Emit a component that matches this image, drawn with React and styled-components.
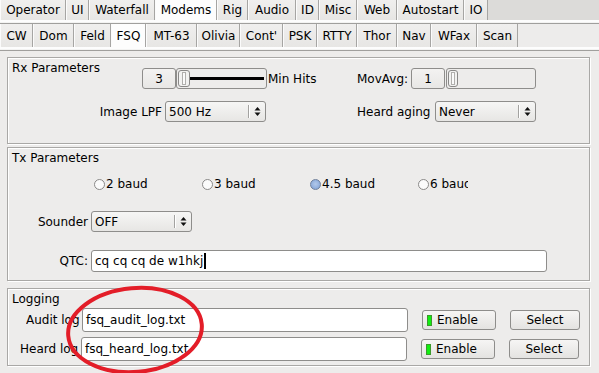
import React from 'react'
import styled, { createGlobalStyle } from 'styled-components'

const GlobalStyle = createGlobalStyle`
  html, body { margin: 0; padding: 0; background: #edeceb; }
  body {
    font-family: "DejaVu Sans", Verdana, sans-serif;
    font-size: 12px;
    color: #000;
  }
`

const Window = styled.div`
  position: relative;
  width: 599px;
  height: 373px;
  overflow: hidden;
  background: #edeceb;
`

const TabBar = styled.div`
  display: flex;
  height: ${(p) => p.h}px;
  background: ${(p) => p.bg};
`

const Tab = styled.div`
  box-sizing: border-box;
  flex: none;
  width: ${(p) => p.w}px;
  display: flex;
  align-items: center;
  justify-content: center;
  white-space: nowrap;
  background: ${(p) => (p.active ? '#fdfdfd' : 'linear-gradient(#f0efee, #e7e6e4)')};
  border-left: 1px solid #fbfbfb;
  border-right: 1px solid #a6a5a3;
`

const TabRule = styled.div`
  box-sizing: border-box;
  height: 4px;
  background: #f3f3f2;
  border-top: 2px solid #fdfdfd;
  border-bottom: 1px solid #a09f9d;
`

const Content = styled.div`
  padding-left: 7px;
`

const Panel = styled.div`
  box-sizing: border-box;
  width: 583px;
  height: ${(p) => p.h}px;
  margin-top: ${(p) => p.mt}px;
  border: 1px solid #a9a8a6;
  box-shadow: inset 1px 1px 0 #fff, 1px 1px 0 #fff;
`

const PanelTitle = styled.div`
  height: 7px;
  margin-top: 3px;
  padding-left: 4px;
  line-height: 14px;
  white-space: nowrap;
`

const Row = styled.div`
  display: flex;
  align-items: center;
  height: ${(p) => p.h}px;
  margin-top: ${(p) => p.mt || 0}px;
  padding-left: ${(p) => p.pl || 0}px;
`

const Label = styled.div`
  flex: none;
  box-sizing: border-box;
  width: ${(p) => p.w}px;
  margin-left: ${(p) => p.ml || 0}px;
  text-align: ${(p) => (p.right ? 'right' : 'left')};
  padding-right: ${(p) => (p.right ? 3 : 0)}px;
  white-space: nowrap;
  overflow: hidden;
`

const Counter = styled.div`
  box-sizing: border-box;
  flex: none;
  width: 34px;
  height: 21px;
  display: flex;
  align-items: center;
  justify-content: center;
  border: 1px solid #8e8d8b;
  border-radius: 3px;
  background: linear-gradient(#f3f2f1, #e8e7e5);
`

const Slider = styled.div`
  box-sizing: border-box;
  flex: none;
  display: flex;
  align-items: center;
  width: ${(p) => p.w}px;
  height: 21px;
  margin-left: ${(p) => p.ml || 0}px;
  padding: 0 2px 0 1px;
  border: 1px solid #8e8d8b;
  border-radius: 3px;
  background: #edeceb;
`

const Handle = styled.div`
  box-sizing: border-box;
  flex: none;
  width: ${(p) => p.w}px;
  height: 17px;
  border: 1px solid #8a8988;
  border-radius: 3px;
  background: #f2f2f1;
  display: flex;
  justify-content: center;
  align-items: center;

  &::after {
    content: '';
    box-sizing: border-box;
    width: 4px;
    height: 13px;
    border: 1px solid #b0afad;
    background: #fbfbfb;
  }
`

const Track = styled.div`
  flex: 1;
  height: 3px;
  background: #000;
`

const Choice = styled.div`
  box-sizing: border-box;
  flex: none;
  display: flex;
  align-items: center;
  width: 101px;
  height: 21px;
  margin-left: ${(p) => p.ml || 0}px;
  border: 1px solid #8e8d8b;
  border-radius: 3px;
  background: linear-gradient(#f6f6f5, #e7e6e4);
`

const ChoiceText = styled.div`
  flex: 1;
  padding-left: 3px;
  white-space: nowrap;
`

const ChoiceArrows = styled.div`
  flex: none;
  box-sizing: border-box;
  width: 17px;
  height: 13px;
  display: flex;
  align-items: center;
  justify-content: center;
  border-left: 1px solid #a3a2a0;
  box-shadow: inset 1px 0 0 #fff;
`

const RadioItem = styled.div`
  flex: none;
  display: flex;
  align-items: center;
  width: ${(p) => p.w}px;
  overflow: hidden;
  white-space: nowrap;
`

const RadioDot = styled.div`
  box-sizing: border-box;
  flex: none;
  width: 11px;
  height: 11px;
  margin-right: 1px;
  border-radius: 50%;
  border: 1px solid ${(p) => (p.on ? '#6f7f9a' : '#8a8988')};
  background: ${(p) => (p.on ? 'radial-gradient(circle at 50% 45%, #b3c9ea, #7c9fd4)' : '#fbfbfb')};
`

const TextField = styled.div`
  box-sizing: border-box;
  flex: none;
  display: flex;
  align-items: center;
  width: ${(p) => p.w}px;
  height: ${(p) => p.h}px;
  margin-left: ${(p) => p.ml || 0}px;
  padding-left: 3px;
  border: 1px solid #8e8d8b;
  border-radius: 3px;
  background: #fff;
  white-space: nowrap;
`

const Caret = styled.span`
  display: inline-block;
  width: 2px;
  height: 16px;
  margin-left: 1px;
  background: #000;
`

const Button = styled.div`
  box-sizing: border-box;
  flex: none;
  display: flex;
  align-items: center;
  justify-content: ${(p) => (p.light ? 'flex-start' : 'center')};
  width: ${(p) => p.w}px;
  height: 20px;
  margin-left: ${(p) => p.ml || 0}px;
  padding-left: ${(p) => (p.light ? 4 : 0)}px;
  border: 1px solid #8e8d8b;
  border-radius: 3px;
  background: linear-gradient(#f6f5f4, #e4e3e1);
`

const Light = styled.span`
  box-sizing: border-box;
  width: 5px;
  height: 11px;
  margin-right: 5px;
  border: 1px solid #3c9a2c;
  background: #12ee12;
`

const Annotation = styled.svg`
  position: absolute;
  left: 60px;
  top: 280px;
  overflow: visible;
`

const topTabs = [
  ['Operator', 66], ['UI', 23], ['Waterfall', 66], ['Modems', 62], ['Rig', 31],
  ['Audio', 48], ['ID', 23], ['Misc', 38], ['Web', 40], ['Autostart', 67], ['IO', 24]
]

const modemTabs = [
  ['CW', 33], ['Dom', 41], ['Feld', 37], ['FSQ', 35], ['MT-63', 51], ['Olivia', 43],
  ["Cont'", 43], ['PSK', 34], ['RTTY', 40], ['Thor', 40], ['Nav', 34], ['WFax', 46], ['Scan', 41]
]

const bauds = ['2 baud', '3 baud', '4.5 baud', '6 baud']

const Arrows = () => (
  <svg width="7" height="11" viewBox="0 0 7 11">
    <polygon points="0.5,4.5 3.5,1 6.5,4.5" fill="#111" />
    <polygon points="0.5,6.5 3.5,10 6.5,6.5" fill="#111" />
  </svg>
)

const SelectBox = ({ value, ml }) => (
  <Choice ml={ml}>
    <ChoiceText>{value}</ChoiceText>
    <ChoiceArrows>
      <Arrows />
    </ChoiceArrows>
  </Choice>
)

const LogRow = ({ label, file, pl, lw, fw, mt }) => (
  <Row h={24} mt={mt} pl={pl}>
    <Label w={lw}>{label}</Label>
    <TextField w={fw} h={24}>{file}</TextField>
    <Button w={74} ml={14} light>
      <Light />
      Enable
    </Button>
    <Button w={70} ml={14}>Select</Button>
  </Row>
)

const App = () => {
  return (
    <>
      <GlobalStyle />
      <Window>
        <TabBar h={20} bg="#dcdbd9">
          {topTabs.map(([name, w]) => (
            <Tab key={name} w={w} active={name === 'Modems'}>{name}</Tab>
          ))}
        </TabBar>
        <TabRule />
        <TabBar h={23} bg="#edeceb">
          {modemTabs.map(([name, w]) => (
            <Tab key={name} w={w} active={name === 'FSQ'}>{name}</Tab>
          ))}
        </TabBar>
        <TabRule />

        <Content>
          <Panel h={87} mt={6}>
            <PanelTitle>Rx Parameters</PanelTitle>
            <Row h={21} pl={134}>
              <Counter>3</Counter>
              <Slider w={91}>
                <Handle w={12} />
                <Track />
              </Slider>
              <Label w={89} ml={1}>Min Hits</Label>
              <Label w={54}>MovAvg:</Label>
              <Counter>1</Counter>
              <Slider w={90} ml={1}>
                <Handle w={10} />
              </Slider>
            </Row>
            <Row h={21} mt={12}>
              <Label w={157} right>Image LPF</Label>
              <SelectBox value="500 Hz" />
              <Label w={78} ml={91}>Heard aging</Label>
              <SelectBox value="Never" />
            </Row>
          </Panel>

          <Panel h={134} mt={3}>
            <PanelTitle>Tx Parameters</PanelTitle>
            <Row h={20} mt={16} pl={86}>
              {bauds.map((b, i) => (
                <RadioItem key={b} w={i === bauds.length - 1 ? 50 : 108}>
                  <RadioDot on={b === '4.5 baud'} />
                  {b}
                </RadioItem>
              ))}
            </Row>
            <Row h={21} mt={17}>
              <Label w={83} right>Sounder</Label>
              <SelectBox value="OFF" />
            </Row>
            <Row h={22} mt={18}>
              <Label w={83} right>QTC:</Label>
              <TextField w={456} h={22}>
                cq cq cq de w1hkj
                <Caret />
              </TextField>
            </Row>
          </Panel>

          <Panel h={78} mt={7}>
            <PanelTitle>Logging</PanelTitle>
            <LogRow label="Audit log" file="fsq_audit_log.txt" pl={18} lw={56} fw={326} mt={9} />
            <LogRow label="Heard log" file="fsq_heard_log.txt" pl={12} lw={61} fw={326} mt={5} />
          </Panel>
        </Content>

        <Annotation width="150" height="95" viewBox="0 0 150 95">
          <ellipse
            cx="75"
            cy="50"
            rx="67"
            ry="42"
            fill="none"
            stroke="#e31d28"
            strokeWidth="4"
            transform="rotate(-5 75 50)"
          />
        </Annotation>
      </Window>
    </>
  )
}

export default App
